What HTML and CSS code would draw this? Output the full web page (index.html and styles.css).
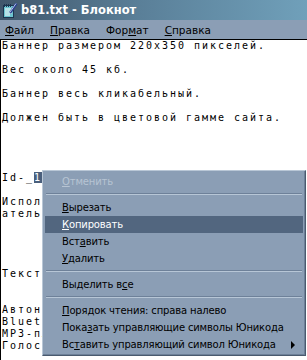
FILE: index.html
```html
<!DOCTYPE html>
<html>
<head>
<meta charset="utf-8">
<link rel="stylesheet" href="styles.css">
</head>
<body>
<div class="window">
  <div class="titlebar">
    <svg class="appicon" width="16" height="16" viewBox="0 0 16 16">
      <rect x="1.5" y="3.5" width="10" height="12" fill="#6cc4d0" stroke="#1d3550"/>
      <line x1="3" y1="7" x2="10" y2="7" stroke="#ffffff"/>
      <line x1="3" y1="9" x2="9" y2="9" stroke="#ffffff"/>
      <line x1="3" y1="11" x2="10" y2="11" stroke="#ffffff"/>
      <line x1="3" y1="13" x2="8" y2="13" stroke="#ffffff"/>
      <rect x="2" y="2" width="1" height="3" fill="#1d3550"/>
      <rect x="4" y="2" width="1" height="3" fill="#1d3550"/>
      <rect x="6" y="2" width="1" height="3" fill="#1d3550"/>
      <rect x="8" y="2" width="1" height="3" fill="#1d3550"/>
      <line x1="14.5" y1="1.5" x2="8" y2="11" stroke="#2a3f8f" stroke-width="2.4"/>
      <line x1="14" y1="1.5" x2="7.6" y2="10.6" stroke="#d8e4ff" stroke-width="0.8"/>
    </svg>
    <span class="title">b81.txt - Блокнот</span>
  </div>
  <div class="menubar">
    <span class="mi"><u>Ф</u>айл</span>
    <span class="mi"><u>П</u>равка</span>
    <span class="mi">Фор<u>м</u>ат</span>
    <span class="mi"><u>С</u>правка</span>
  </div>
  <div class="editor">
<pre class="text">Баннер размером 220x350 пикселей.

Вес около 45 кб.

Баннер весь кликабельный.

Должен быть в цветовой гамме сайта.




Id-_<span class="sel">1</span>234

Использовать ссылку на страницу польз
ательского каталога.




Текст на баннере:


Автономная гарнитура
Bluetooth-гарнитура
MP3-плеер
Голосовой набор</pre>
  </div>
  <div class="ctx">
    <div class="item disabled"><u>О</u>тменить</div>
    <div class="sep"></div>
    <div class="item"><u>В</u>ырезать</div>
    <div class="item active"><u>К</u>опировать</div>
    <div class="item">Вст<u>а</u>вить</div>
    <div class="item"><u>У</u>далить</div>
    <div class="sep"></div>
    <div class="item">Выделить в<u>с</u>е</div>
    <div class="sep"></div>
    <div class="item"><u>П</u>орядок чтения: справа налево</div>
    <div class="item">Пока<u>з</u>ать управляющие символы Юникода</div>
    <div class="item sub">Вс<u>т</u>авить управляющий символ Юникода<span class="arrow"></span></div>
  </div>
</div>
</body>
</html>
```

FILE: styles.css
```css
html, body {
  margin: 0;
  padding: 0;
  background: #ffffff;
}
.window {
  position: relative;
  width: 307px;
  height: 360px;
  overflow: hidden;
  display: flex;
  flex-direction: column;
  background: #ffffff;
}
.titlebar {
  height: 20px;
  display: flex;
  align-items: center;
  gap: 3px;
  padding-left: 2px;
  background: linear-gradient(to right, #40566b 0%, #5a7f98 45%, #70a0ba 100%);
  flex: none;
}
.appicon {
  display: block;
  flex: none;
}
.title {
  font-family: "DejaVu Sans", sans-serif;
  font-weight: bold;
  font-size: 11.5px;
  color: #ffffff;
}
.menubar {
  height: 19px;
  display: flex;
  align-items: center;
  background: #8b9eb5;
  font-family: "DejaVu Sans", sans-serif;
  font-size: 10.5px;
  color: #000000;
  flex: none;
}
.mi {
  padding: 0 7px 0 5px;
  margin-right: 4px;
}
.editor {
  flex: 1;
  border-top: 1px solid #000000;
  border-left: 1px solid #000000;
  background: #ffffff;
  overflow: hidden;
}
.text {
  margin: 0;
  padding: 0 0 0 1px;
  font-family: "DejaVu Sans Mono", monospace;
  font-size: 10px;
  letter-spacing: 1.98px;
  line-height: 12px;
  color: #000000;
  white-space: pre;
}
.sel {
  background: #4a5f7c;
  color: #ffffff;
}
.ctx {
  position: absolute;
  left: 42px;
  top: 170px;
  width: 258px;
  padding: 2px;
  background: #8b9eb5;
  border-top: 1px solid #b9c7d6;
  border-left: 1px solid #b9c7d6;
  border-right: 1px solid #4a5a6e;
  border-bottom: 1px solid #4a5a6e;
  box-shadow: inset -1px -1px 0 #6d8098;
  font-family: "DejaVu Sans", sans-serif;
  font-size: 10px;
  letter-spacing: -0.15px;
  color: #000000;
}
.item {
  position: relative;
  height: 17px;
  line-height: 17px;
  padding-left: 17px;
  white-space: nowrap;
}
.item.disabled {
  color: #b7c4d3;
}
.item.active {
  background: #52667f;
  color: #ffffff;
}
.sep {
  height: 0;
  margin: 3px 1px 4px 1px;
  border-top: 1px solid #6e8199;
  border-bottom: 1px solid #b7c6d6;
}
.arrow {
  position: absolute;
  right: 8px;
  top: 5px;
  width: 0;
  height: 0;
  border-top: 4px solid transparent;
  border-bottom: 4px solid transparent;
  border-left: 4px solid #000000;
}
```
